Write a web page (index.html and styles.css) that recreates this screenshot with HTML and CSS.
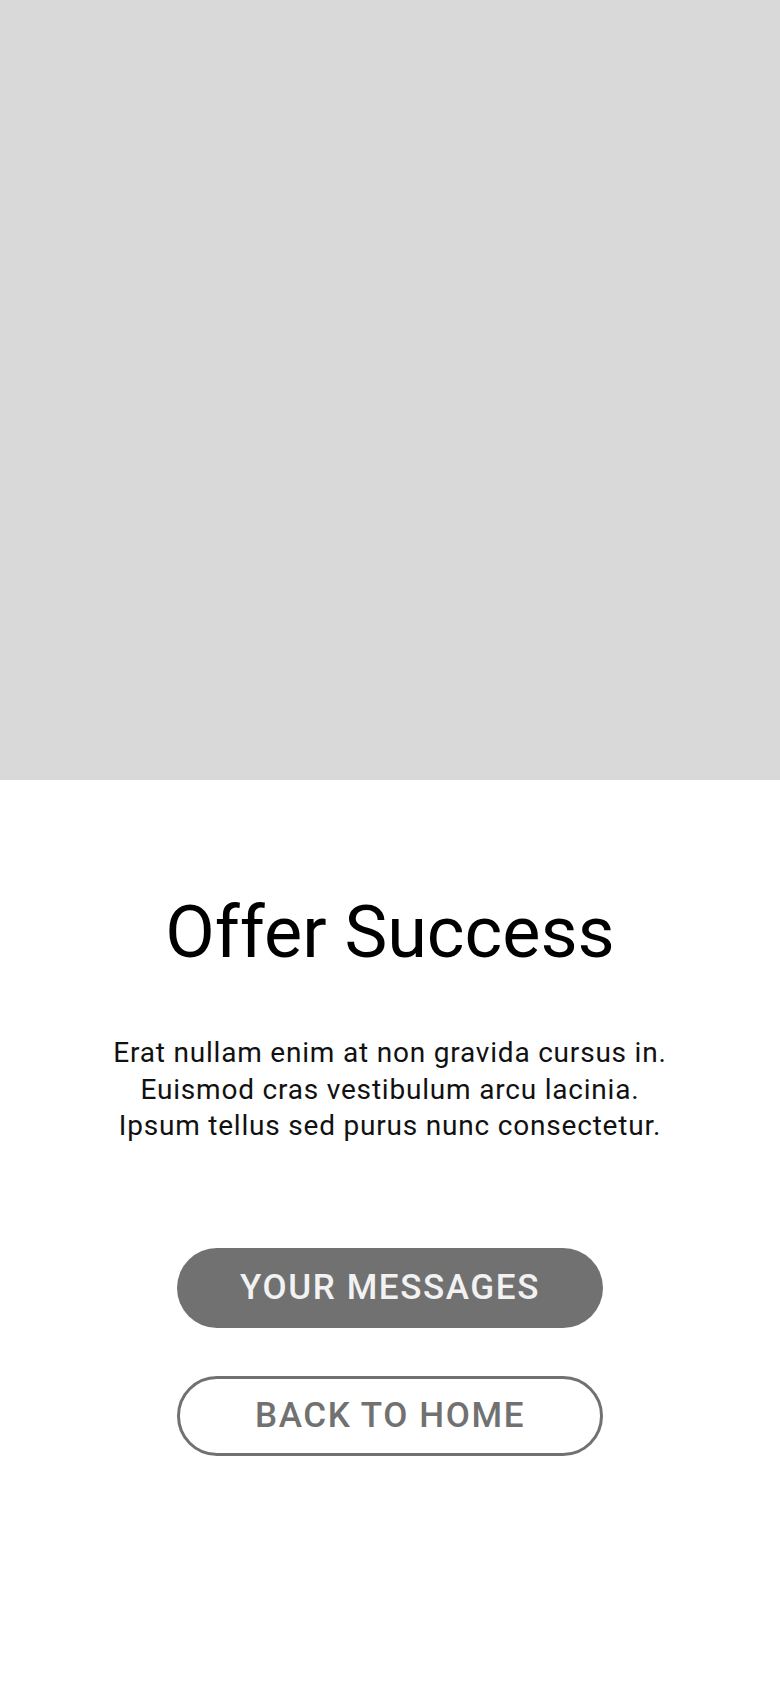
FILE: index.html
```html
<!DOCTYPE html>
<html lang="en">
<head>
<meta charset="utf-8">
<link rel="stylesheet" href="styles.css">
</head>
<body>
<div class="page">
  <div class="hero"></div>
  <div class="content">
    <h1 class="title">Offer Success</h1>
    <p class="text">Erat nullam enim at non gravida cursus in.<br>Euismod cras vestibulum arcu lacinia.<br>Ipsum tellus sed purus nunc consectetur.</p>
    <div class="actions">
      <button class="btn btn-primary">YOUR MESSAGES</button>
      <button class="btn btn-outline">BACK TO HOME</button>
    </div>
  </div>
</div>
</body>
</html>
```

FILE: styles.css
```css
html, body {
  margin: 0;
  padding: 0;
  background: #ffffff;
}
body {
  font-family: Roboto, "Noto Sans", sans-serif;
}
.page {
  width: 780px;
  min-height: 1688px;
  display: flex;
  flex-direction: column;
}
.hero {
  height: 780px;
  background: #d9d9d9;
}
.content {
  display: flex;
  flex-direction: column;
  align-items: center;
}
.title {
  margin: 111px 0 0;
  font-size: 72px;
  font-weight: 400;
  line-height: 84px;
  color: #000;
}
.text {
  margin: 60px 0 0;
  font-size: 28px;
  line-height: 36.5px;
  letter-spacing: 0.8px;
  text-align: center;
  color: #111;
}
.actions {
  margin-top: 103px;
  display: flex;
  flex-direction: column;
  gap: 48px;
}
.btn {
  width: 426px;
  height: 80px;
  border-radius: 40px;
  font-family: Roboto, sans-serif;
  font-size: 35px;
  font-weight: 500;
  letter-spacing: 1.6px;
  box-sizing: border-box;
  padding: 0;
  cursor: pointer;
}
.btn-primary {
  background: #717171;
  color: #f2f2f2;
  border: none;
}
.btn-outline {
  background: #fff;
  color: #717171;
  border: 3px solid #717171;
}
```
